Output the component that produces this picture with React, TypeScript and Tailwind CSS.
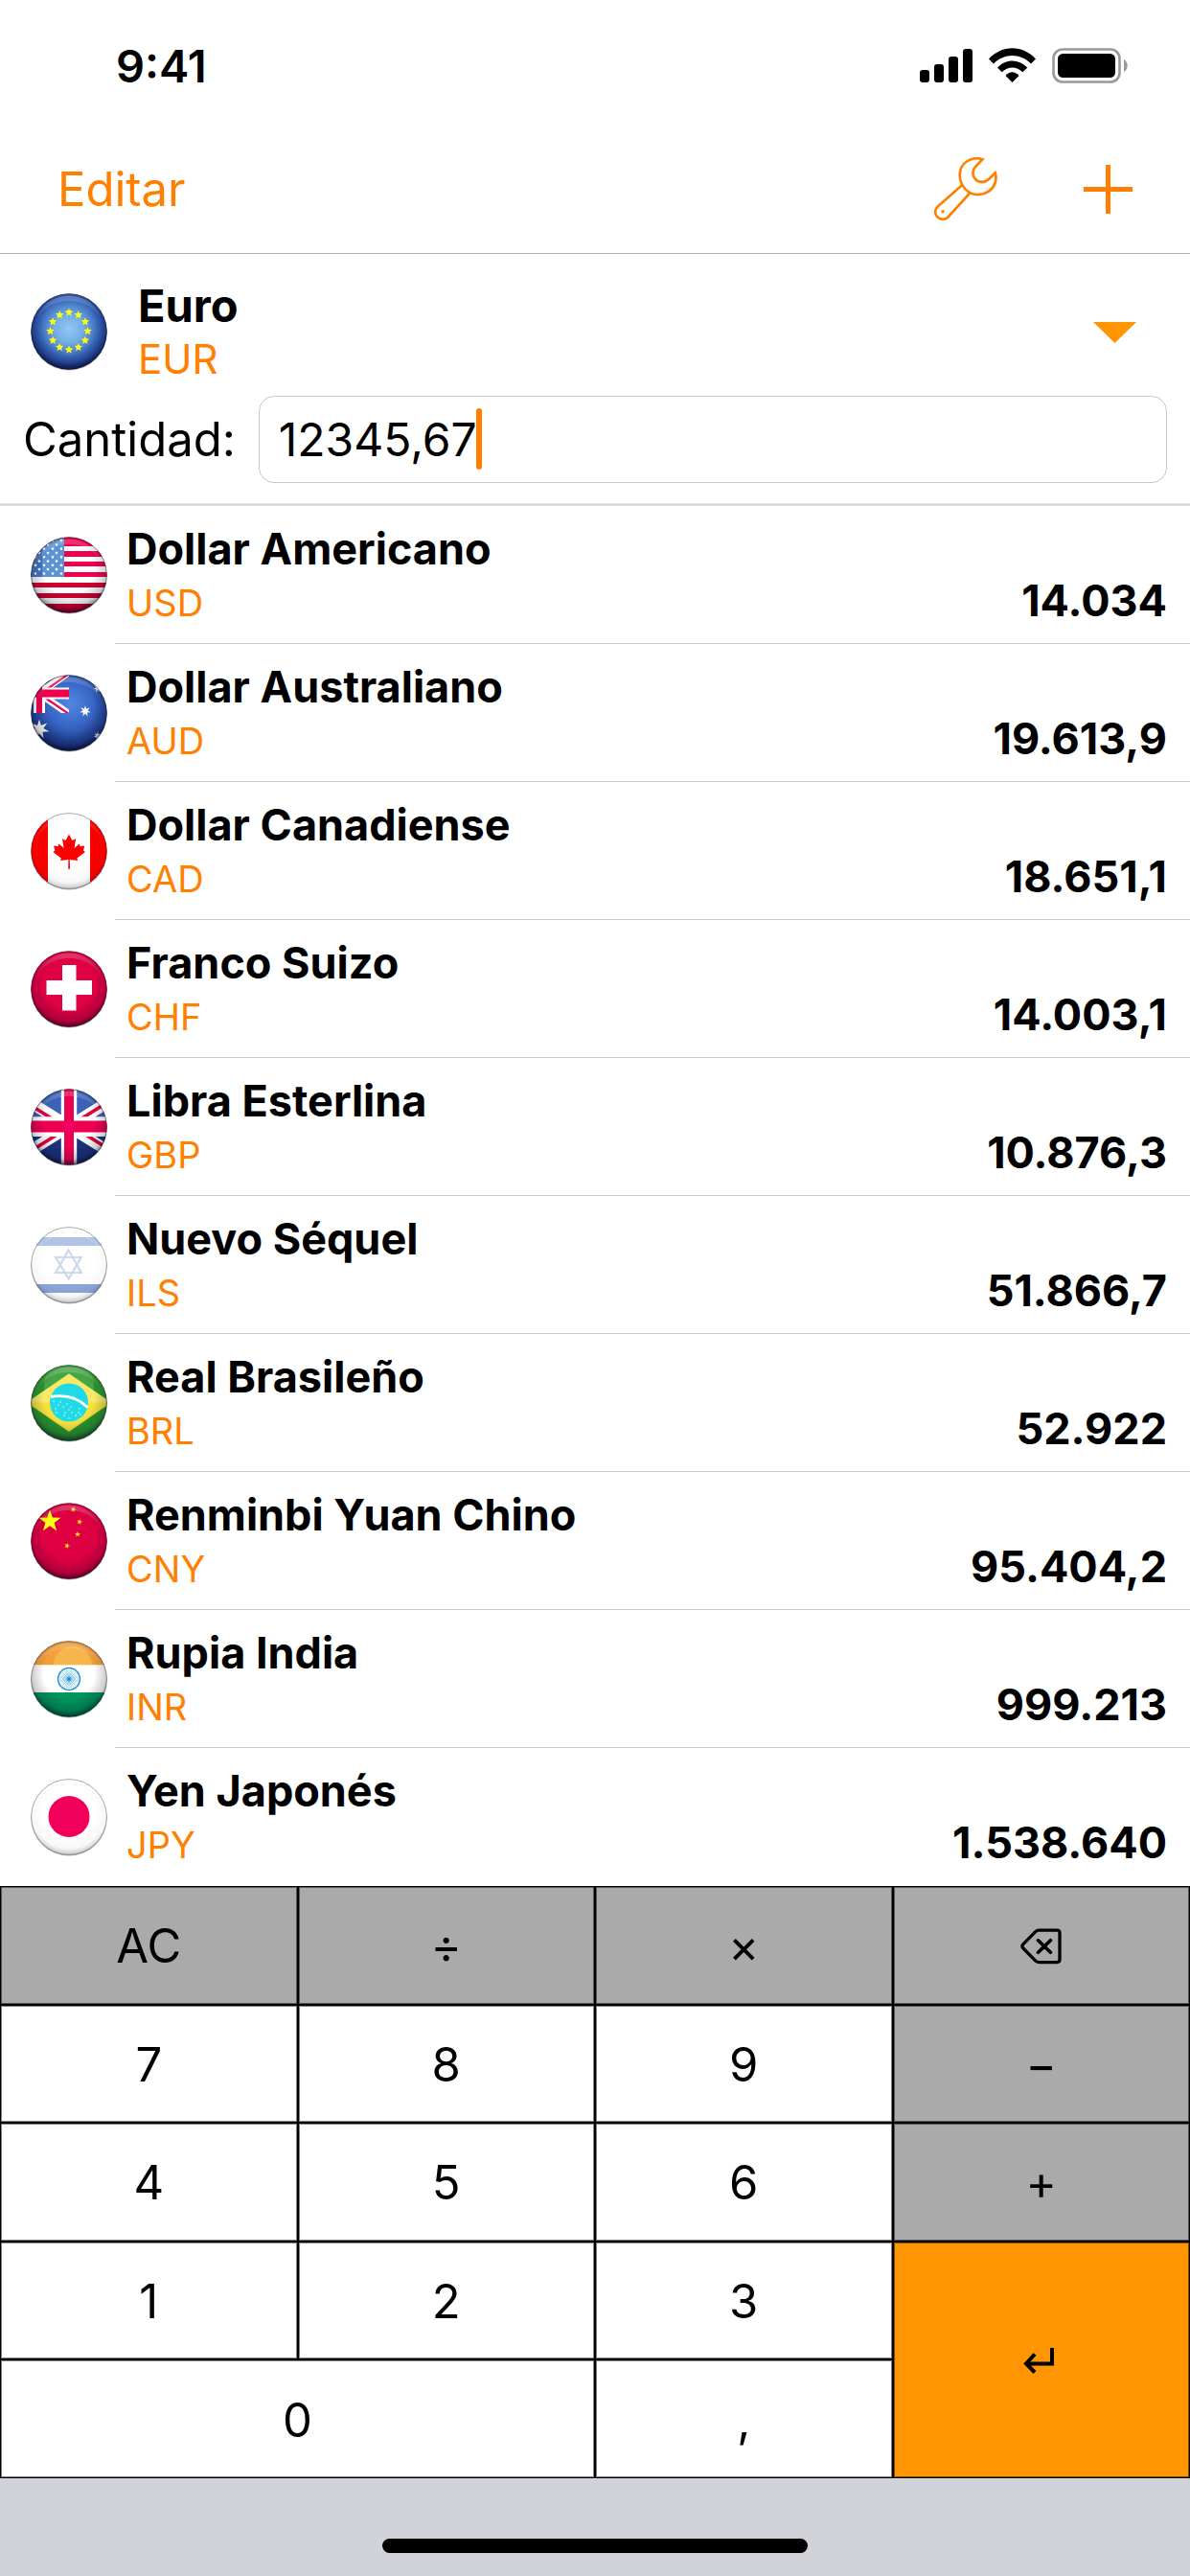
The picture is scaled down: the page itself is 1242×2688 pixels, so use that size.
import React, { useId, useState } from "react";

function star(cx: number, cy: number, r: number, points = 5, inner = 0.4, rotate = 0) {
  const out: string[] = [];
  for (let i = 0; i < points * 2; i++) {
    const radius = i % 2 === 0 ? r : r * inner;
    const a = (Math.PI * i) / points - Math.PI / 2 + rotate;
    out.push(`${(cx + radius * Math.cos(a)).toFixed(2)},${(cy + radius * Math.sin(a)).toFixed(2)}`);
  }
  return out.join(" ");
}

const RED = "#f0004f";

const flags: Record<string, React.ReactNode> = {
  EUR: (
    <>
      <defs>
        <radialGradient id="europe" cx="0.5" cy="0.46" r="0.52">
          <stop offset="0" stopColor="#92c8f3" />
          <stop offset="0.35" stopColor="#74aee4" />
          <stop offset="0.7" stopColor="#3d6fc0" />
          <stop offset="1" stopColor="#1c3a92" />
        </radialGradient>
      </defs>
      <rect width="80" height="80" fill="url(#europe)" />
      {Array.from({ length: 12 }, (_, i) => (
        <polygon
          key={i}
          points={star(40 + 19.5 * Math.sin((i * Math.PI) / 6), 39.5 - 19.5 * Math.cos((i * Math.PI) / 6), 4.5, 5, 0.45)}
          fill="#ffff14"
        />
      ))}
    </>
  ),
  USD: (
    <>
      <rect width="80" height="80" fill="#fff" />
      {[
        [0, 10],
        [15, 6],
        [26, 5],
        [37, 5],
        [48, 5],
        [59, 5],
        [70, 10],
      ].map(([y, h]) => (
        <rect key={y} y={y} width="80" height={h} fill={y > 44 ? "#d2002f" : RED} />
      ))}
      <rect width="35" height="42" fill="#5b93d4" />
      <rect width="12" height="42" fill="#2b58a4" opacity="0.5" />
      {Array.from({ length: 9 }, (_, row) =>
        Array.from({ length: 5 }, (_, col) => (
          <polygon
            key={`${row}-${col}`}
            points={star(32 - col * 9 - (row % 2 ? 5 : 0), 4 + row * 4.3, 1.9, 5, 0.5)}
            fill="#fff"
          />
        )),
      )}
    </>
  ),
  AUD: (
    <>
      <defs>
        <radialGradient id="australia" cx="0.52" cy="0.38" r="0.6">
          <stop offset="0" stopColor="#5288e2" />
          <stop offset="0.5" stopColor="#3765c4" />
          <stop offset="1" stopColor="#18317f" />
        </radialGradient>
      </defs>
      <rect width="80" height="80" fill="url(#australia)" />
      <svg width="40" height="40">
        <path d="M9 19.5L40 -3M9 19.5L40 41" stroke="#fff" strokeWidth="7.5" />
        <path d="M13 18L40 -1M12 22L40 41" stroke={RED} strokeWidth="2.2" />
        <path d="M9 0V40M0 19.5H40" stroke="#fff" strokeWidth="12" />
        <path d="M9 0V40" stroke={RED} strokeWidth="6" />
        <path d="M0 19.5H40" stroke={RED} strokeWidth="8" />
      </svg>
      <polygon points={star(9, 57, 10.5, 7, 0.42)} fill="#fff" />
      <polygon points={star(57, 38, 6, 7, 0.42)} fill="#fff" />
      <polygon points={star(70, 64, 4.5, 7, 0.42)} fill="#fff" />
      <polygon points={star(70, 14, 4.5, 7, 0.42)} fill="#fff" />
    </>
  ),
  CAD: (
    <>
      <rect width="80" height="80" fill="#fff" />
      <rect width="18" height="80" fill="#fb0000" />
      <rect x="62" width="18" height="80" fill="#fb0000" />
      <path
        d="M40 22.5L43.4 29L47.2 27.2L45.6 37L50.6 32.6L51.6 35.2L56.2 34.4L55 39.4L57 41L48.4 47.6L49.2 50L40.8 48.9L41 58.8H39.2L39.4 48.9L31 50L31.8 47.6L23.4 41L25.4 39.4L24 34.4L28.6 35.2L29.6 32.6L34.6 37L33 27.2L36.6 29Z"
        fill="#fb0000"
      />
    </>
  ),
  CHF: (
    <>
      <rect width="80" height="80" fill="#e00044" />
      <path d="M33 15H47.5V31H64V46H47.5V62.5H33V46H16.5V31H33Z" fill="#fff" />
    </>
  ),
  GBP: (
    <>
      <rect width="80" height="80" fill="#3b62b8" />
      <rect y="44" width="80" height="36" fill="#1c347e" />
      <path d="M-20 2L100 77M100 2L-20 77" stroke="#fff" strokeWidth="12" />
      <path d="M-20 5L33 38M47 41.5L100 74.6M100 2L47 35M-20 77.5L33 44.5" stroke="#e6003c" strokeWidth="3.6" />
      <path d="M40 0V80" stroke="#fff" strokeWidth="16.4" />
      <path d="M0 39.6H80" stroke="#fff" strokeWidth="20.6" />
      <path d="M40 0V80" stroke="#ee0050" strokeWidth="10" />
      <path d="M0 39.6H80" stroke="#ee0050" strokeWidth="12" />
      <circle cx="40" cy="39.6" r="5" fill="#fb007c" opacity="0.5" />
    </>
  ),
  ILS: (
    <>
      <rect width="80" height="80" fill="#fff" />
      <rect y="11" width="80" height="9" fill="#b3c3e6" />
      <rect y="60" width="80" height="9" fill="#8ba6d8" />
      <g fill="none" stroke="#ccd8ec" strokeWidth="2.2">
        <path d="M39.5 24.5L52.8 48H26.2Z" />
        <path d="M39.5 54.5L26.2 32H52.8Z" />
      </g>
    </>
  ),
  BRL: (
    <>
      <rect width="80" height="80" fill="#2b962f" />
      <circle cx="40" cy="22" r="26" fill="#6fbe6a" opacity="0.4" />
      <path d="M40 9.5L84 39.5L40 70L-4 39.5Z" fill="#f7e23c" />
      <path d="M40 9.5L84 39.5H-4Z" fill="#fbee84" opacity="0.6" />
      <circle cx="40" cy="39.5" r="20" fill="#22d9e8" />
      <path d="M21 33.5Q44 29.5 59.5 44.5" stroke="#fff" strokeWidth="2.8" fill="none" />
      {[
        [24, 38], [26, 46], [29, 42], [27, 50], [34, 44], [36, 50], [38, 41], [40, 47], [42, 44],
        [40, 56], [45, 34], [47, 53], [50, 50], [51, 46], [52, 52], [35, 53], [43, 50], [31, 39],
      ].map(([x, y]) => (
        <circle key={`${x}-${y}`} cx={x} cy={y} r="0.8" fill="#d8fbff" />
      ))}
    </>
  ),
  CNY: (
    <>
      <rect width="80" height="80" fill="#df0043" />
      <polygon points={star(20, 19.5, 12)} fill="#ffff14" />
      <polygon points={star(44.5, 7, 3.2, 5, 0.4, 0.4)} fill="#ffe014" />
      <polygon points={star(51, 20, 3.2, 5, 0.4, 0.2)} fill="#ffe014" />
      <polygon points={star(49, 33, 3.2)} fill="#ffe014" />
      <polygon points={star(38, 45, 3.2, 5, 0.4, 0.3)} fill="#ffe014" />
    </>
  ),
  INR: (
    <>
      <rect width="80" height="80" fill="#fff" />
      <rect width="80" height="25.5" fill="#f3a03a" />
      <circle cx="44" cy="26" r="20" fill="#ffcf66" opacity="0.45" />
      <rect y="25.5" width="80" height="28.5" fill="#fff" />
      <rect y="54" width="80" height="26" fill="#00955c" />
      <circle cx="40" cy="40" r="11.4" fill="none" stroke="#1f93cf" strokeWidth="1.5" />
      {Array.from({ length: 24 }, (_, i) => (
        <line
          key={i}
          x1="40"
          y1="40"
          x2={40 + 10 * Math.cos((i * Math.PI) / 12)}
          y2={40 + 10 * Math.sin((i * Math.PI) / 12)}
          stroke="#64b6e0"
          strokeWidth="0.7"
        />
      ))}
      <circle cx="40" cy="40" r="2" fill="#1f93cf" />
    </>
  ),
  JPY: (
    <>
      <rect width="80" height="80" fill="#fff" />
      <circle cx="40" cy="39.5" r="21.5" fill="#f00058" />
    </>
  ),
};

const paleRim = ["CAD", "ILS", "JPY"];

function Flag({ code }: { code: string }) {
  const id = useId();
  const pale = paleRim.includes(code);
  return (
    <svg viewBox="0 0 80 82" className="h-[82px] w-20 shrink-0" aria-hidden="true">
      <defs>
        <clipPath id={`${id}c`}>
          <circle cx="40" cy="40" r="39.6" />
        </clipPath>
        <radialGradient id={`${id}s`} cx="0.5" cy="0.42" r="0.6">
          <stop offset="0.55" stopColor="#000018" stopOpacity="0" />
          <stop offset="0.82" stopColor="#000018" stopOpacity={pale ? 0.03 : 0.2} />
          <stop offset="1" stopColor="#000018" stopOpacity={pale ? 0.28 : 0.75} />
        </radialGradient>
        <linearGradient id={`${id}g`} x1="0" y1="0" x2="0" y2="1">
          <stop offset="0" stopColor="#fff" stopOpacity="0.22" />
          <stop offset="1" stopColor="#fff" stopOpacity="0" />
        </linearGradient>
      </defs>
      <circle cx="40" cy="41" r="39.6" fill="#000" opacity="0.3" />
      <g clipPath={`url(#${id}c)`}>
        {flags[code]}
        <circle cx="40" cy="40" r="40" fill={`url(#${id}s)`} />
        <path d="M5 30A36 36 0 0 1 75 30A37 33 0 0 0 5 30Z" fill={`url(#${id}g)`} />
      </g>
      <circle cx="40" cy="40" r="39.4" fill="none" stroke="#111" strokeOpacity={pale ? 0.35 : 0.45} strokeWidth="1" />
    </svg>
  );
}

const rates = [
  { name: "Dollar Americano", code: "USD", amount: "14.034" },
  { name: "Dollar Australiano", code: "AUD", amount: "19.613,9" },
  { name: "Dollar Canadiense", code: "CAD", amount: "18.651,1" },
  { name: "Franco Suizo", code: "CHF", amount: "14.003,1" },
  { name: "Libra Esterlina", code: "GBP", amount: "10.876,3" },
  { name: "Nuevo Séquel", code: "ILS", amount: "51.866,7" },
  { name: "Real Brasileño", code: "BRL", amount: "52.922" },
  { name: "Renminbi Yuan Chino", code: "CNY", amount: "95.404,2" },
  { name: "Rupia India", code: "INR", amount: "999.213" },
  { name: "Yen Japonés", code: "JPY", amount: "1.538.640" },
];

function StatusBar() {
  return (
    <div className="flex h-[136px] items-center justify-between pr-16 pl-[121px]">
      <span className="text-[47px] leading-none font-semibold">9:41</span>
      <svg viewBox="960 48 218 39" className="h-[39px] w-[218px]" aria-hidden="true">
        <rect x="960" y="72" width="10" height="13" rx="3" />
        <rect x="975" y="66" width="10" height="19" rx="3" />
        <rect x="990" y="58" width="10" height="27" rx="3" />
        <rect x="1005" y="50" width="10" height="35" rx="3" />
        <path d="M1032 60.5C1046 45.5 1067 45.5 1081 60.5L1076 65.5C1065 54 1048 54 1037 65.5Z" />
        <path d="M1041 69.5C1050 60 1063 60 1072.3 69.5L1067.3 74.3C1061 68 1052 68 1045.7 74.3Z" />
        <path d="M1049.5 78C1054 73 1059 73 1063.5 78L1056.5 85Z" />
        <rect x="1099.5" y="50.5" width="69" height="34" rx="9.5" fill="none" stroke="#999" strokeWidth="2.6" />
        <rect x="1104" y="55" width="60" height="25" rx="5.5" />
        <path d="M1173 61C1178 64 1178 71 1173 74Z" fill="#999" />
      </svg>
    </div>
  );
}

function Toolbar() {
  return (
    <header className="flex h-[129px] items-center justify-between border-b border-[#b2b2b2] px-[60px] pb-[6px] text-[#ff8000]">
      <button type="button" className="text-[49px] leading-none">
        Editar
      </button>
      <div className="flex items-center gap-[90px]">
        <button type="button" aria-label="Ajustes">
          <svg viewBox="225 492 198 198" className="size-[66px]" fill="none" stroke="currentColor" strokeWidth="8" aria-hidden="true">
            <path d="M376 499C342 488 305 509 305 548C305 560 308 570 313 579L237 646C225 657 227 672 236 680C245 689 260 688 267 681L337 604C355 612 380 610 396 599C414 586 423 564 416 541L397 560C383 573 364 573 353 560C344 549 344 532 354 522Z" />
            <path d="M311 576Q321 595 339 604" />
            <circle cx="252" cy="662" r="5" fill="currentColor" stroke="none" />
          </svg>
        </button>
        <button type="button" aria-label="Añadir">
          <svg viewBox="0 0 51 51" className="size-[51px]" stroke="currentColor" strokeWidth="5" aria-hidden="true">
            <path d="M25.5 0V51M0 25.5H51" />
          </svg>
        </button>
      </div>
    </header>
  );
}

function BaseCurrency() {
  const [amount, setAmount] = useState("12345,67");
  return (
    <section className="border-b-[3px] border-[#dddddd] px-6 pt-[26px] pb-[21px]">
      <button type="button" aria-haspopup="listbox" className="flex w-full items-center gap-8 pr-8 pl-2 text-left">
        <Flag code="EUR" />
        <span className="flex grow flex-col">
          <span className="text-[47px] leading-[56px] font-bold">Euro</span>
          <span className="text-[42px] leading-[56px] text-[#ff8000]">EUR</span>
        </span>
        <svg viewBox="0 0 45 22" className="h-[22px] w-[45px]" aria-hidden="true">
          <path d="M0 0H45L22.5 22Z" fill="#ff9500" />
        </svg>
      </button>
      <div className="mt-[10px] flex items-center gap-6">
        <label htmlFor="cantidad" className="text-[49px] leading-none">
          Cantidad:
        </label>
        <div className="relative grow">
          <input
            id="cantidad"
            type="text"
            inputMode="decimal"
            value={amount}
            onChange={(e) => setAmount(e.target.value)}
            className="block h-[91px] w-full rounded-[16px] border border-[#c8c8c8] bg-white px-5 text-[48px] caret-[#ff8000] outline-none"
          />
          <span className="absolute top-[13px] left-[227px] h-16 w-[6px] rounded-full bg-[#ff8000]" />
        </div>
      </div>
    </section>
  );
}

function RateRow({ name, code, amount, last }: { name: string; code: string; amount: string; last: boolean }) {
  return (
    <li className="flex h-36 items-stretch pl-8">
      <div className="flex w-[88px] shrink-0 items-center pt-[2px]">
        <Flag code={code} />
      </div>
      <div className={last ? "grow pt-[17px] pr-6 pl-3" : "grow border-b border-[#c8c7cc] pt-[17px] pr-6 pl-3"}>
        <div className="text-[45px] leading-[56px] font-bold">{name}</div>
        <div className="flex items-baseline justify-between leading-[51px]">
          <span className="text-[38px] text-[#ff8000]">{code}</span>
          <span className="text-[45px] font-bold">{amount}</span>
        </div>
      </div>
    </li>
  );
}

type KeyTone = "light" | "dark" | "accent";

const toneClass: Record<KeyTone, string> = {
  light: "bg-white",
  dark: "bg-[#aaaaaa]",
  accent: "bg-[#ff9500]",
};

function Key({
  children,
  tone = "light",
  span = "",
  label,
}: {
  children: React.ReactNode;
  tone?: KeyTone;
  span?: string;
  label?: string;
}) {
  return (
    <button
      type="button"
      aria-label={label}
      className={`flex items-center justify-center border border-black pt-[2px] text-[49px] leading-none shadow-[inset_0_0_0_1px_rgba(0,0,0,0.5)] ${toneClass[tone]} ${span}`}
    >
      {children}
    </button>
  );
}

function Keypad() {
  return (
    <div className="grid h-[618px] grid-cols-4 grid-rows-5">
      <Key tone="dark">AC</Key>
      <Key tone="dark">÷</Key>
      <Key tone="dark">×</Key>
      <Key tone="dark" label="Borrar">
        <svg viewBox="462 156 130 114" className="h-[38px] w-[43px]" fill="none" stroke="#000" strokeWidth="10" strokeLinecap="round" strokeLinejoin="round" aria-hidden="true">
          <path d="M521 162H577Q586 162 586 171V254Q586 263 577 263H521Q514 263 509 258L471 219Q464 212.5 471 206L509 167Q514 162 521 162Z" />
          <path d="M518 194L557 232M557 194L518 232" strokeWidth="11" />
        </svg>
      </Key>
      <Key>7</Key>
      <Key>8</Key>
      <Key>9</Key>
      <Key tone="dark">−</Key>
      <Key>4</Key>
      <Key>5</Key>
      <Key>6</Key>
      <Key tone="dark">+</Key>
      <Key>1</Key>
      <Key>2</Key>
      <Key>3</Key>
      <Key tone="accent" span="row-span-2" label="Intro">
        <svg viewBox="0 0 33 27" className="mr-1 h-[27px] w-[33px]" fill="none" stroke="#000" strokeWidth="4" aria-hidden="true">
          <path d="M30 0V16.5H3" />
          <path d="M12 6.5L3 16.5L12 25.5" />
        </svg>
      </Key>
      <Key span="col-span-2">0</Key>
      <Key>,</Key>
    </div>
  );
}

export default function App() {
  return (
    <div className="flex min-h-screen flex-col bg-white font-['Inter',sans-serif] text-black">
      <StatusBar />
      <Toolbar />
      <main>
        <BaseCurrency />
        <ul>
          {rates.map((rate, i) => (
            <RateRow key={rate.code} {...rate} last={i === rates.length - 1} />
          ))}
        </ul>
      </main>
      <Keypad />
      <footer className="flex grow items-end justify-center bg-[#d1d3d8] pb-6">
        <div className="mt-[63px] h-[15px] w-[444px] rounded-full bg-black" />
      </footer>
    </div>
  );
}
